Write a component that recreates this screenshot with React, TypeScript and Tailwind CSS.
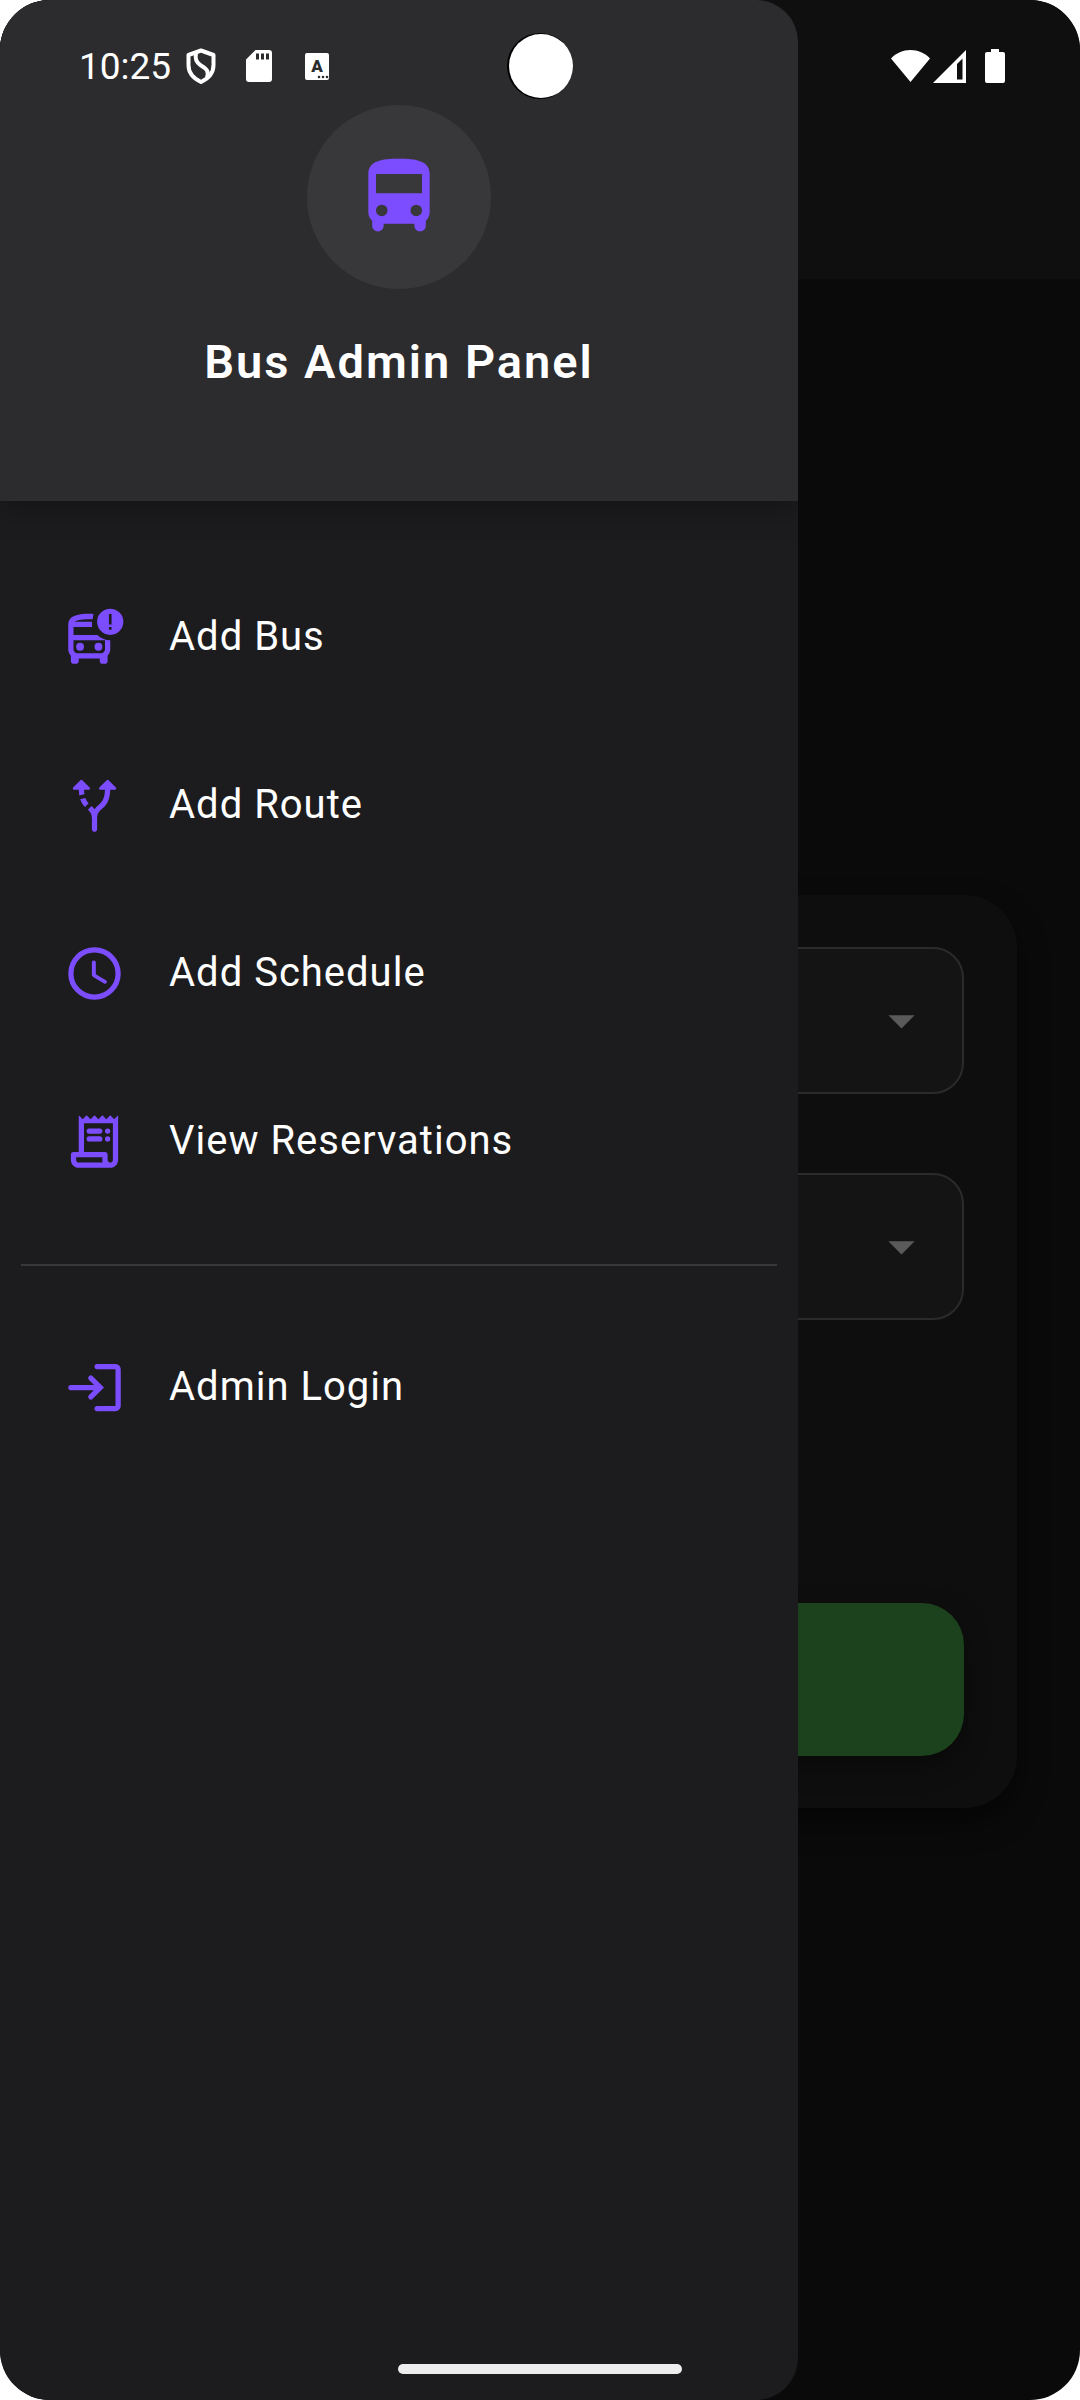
import React from "react";

type IconProps = { className?: string };

function BusIcon({ className }: IconProps) {
  return (
    <svg viewBox="0 0 24 24" fill="currentColor" className={className} aria-hidden="true">
      <path
        fillRule="evenodd"
        d="M4 16c0 .88.39 1.67 1 2.22V19.5a1.5 1.5 0 0 0 3 0V19h8v.5a1.5 1.5 0 0 0 3 0v-1.28c.61-.55 1-1.34 1-2.22V6c0-3.5-3.58-4-8-4s-8 .5-8 4v10zm3.5 1a1.5 1.5 0 1 1 0-3 1.5 1.5 0 0 1 0 3zm9 0a1.5 1.5 0 1 1 0-3 1.5 1.5 0 0 1 0 3zM18 11H6V6h12v5z"
      />
    </svg>
  );
}

function BusAlertIcon({ className }: IconProps) {
  return (
    <svg viewBox="0 0 24 24" fill="currentColor" className={className} aria-hidden="true">
      <path
        fillRule="evenodd"
        d="M11.6 3.02C6.4 2.8 2 3.4 2 7v9.5c0 .95.38 1.81 1 2.44V21c0 .55.45 1 1 1h1c.55 0 1-.45 1-1v-1h8v1c0 .55.45 1 1 1h1c.55 0 1-.45 1-1v-2.06c.62-.63 1-1.49 1-2.44V13c-1.91 0-3.63-.76-4.89-2H4V8h7.08A7 7 0 0 1 11.08 6H4.43c.6-.52 2.03-1 5.57-1h1.29c.07-.5.17-1.2.31-1.98zM4 13h12v3.5c0 .83-.67 1.5-1.5 1.5h-9c-.83 0-1.5-.67-1.5-1.5V13z"
      />
      <circle cx="6.5" cy="15.5" r="1.5" />
      <circle cx="13.5" cy="15.5" r="1.5" />
      <path
        fillRule="evenodd"
        d="M18 1a5 5 0 1 0 0 10 5 5 0 0 0 0-10zm.5 8h-1V8h1v1zm0-2h-1V3h1v4z"
      />
    </svg>
  );
}

function RouteIcon({ className }: IconProps) {
  return (
    <svg viewBox="0 0 24 24" fill="currentColor" className={className} aria-hidden="true">
      <path d="M9.78 11.16l-1.42 1.42c-.68-.69-1.34-1.58-1.79-2.94l1.94-.49c.32.89.77 1.5 1.27 2.01zM10.15 5.15L7.35 2.35a.5.5 0 0 0-.7 0L3.85 5.15a.5.5 0 0 0 .36.85h1.81c.02.81.08 1.54.19 2.17l1.94-.49C8.08 7.2 8.03 6.63 8.02 6h1.78c.44 0 .67-.54.35-.85zM20.15 5.15l-2.8-2.8a.5.5 0 0 0-.7 0l-2.8 2.8a.5.5 0 0 0 .36.85h1.78c-.1 3.68-1.28 4.75-2.54 5.88-.5.44-1.01.92-1.45 1.55-.34-.49-.73-.88-1.13-1.24L9.46 13.6c.93.85 1.54 1.54 1.54 3.4v4c0 .55.45 1 1 1s1-.45 1-1v-4c0-2.02.71-2.66 1.79-3.63 1.38-1.24 3.08-2.78 3.2-7.37h1.8c.45 0 .67-.54.36-.85z" />
    </svg>
  );
}

function ClockIcon({ className }: IconProps) {
  return (
    <svg viewBox="0 0 24 24" fill="currentColor" className={className} aria-hidden="true">
      <circle cx="12" cy="12" r="9" fill="none" stroke="currentColor" strokeWidth="2" />
      <path d="M11.78 7h-.06c-.4 0-.72.32-.72.72v4.72c0 .35.18.68.49.86l4.15 2.49c.34.2.78.1.98-.24.21-.34.1-.79-.25-.99l-3.87-2.3V7.72c0-.4-.32-.72-.72-.72z" />
    </svg>
  );
}

function ReceiptIcon({ className }: IconProps) {
  return (
    <svg viewBox="0 0 24 24" fill="currentColor" className={className} aria-hidden="true">
      <path
        fillRule="evenodd"
        d="M19.5 3.5L18 2l-1.5 1.5L15 2l-1.5 1.5L12 2l-1.5 1.5L9 2 7.5 3.5 6 2v14H4c-.55 0-1 .45-1 1v2c0 1.66 1.34 3 3 3h12c1.66 0 3-1.34 3-3V2l-1.5 1.5zM15 20H6c-.55 0-1-.45-1-1v-1h10v2zm4-1c0 .55-.45 1-1 1s-1-.45-1-1v-2c0-.55-.45-1-1-1H8V5h11v14z"
      />
      <rect x="9" y="7" width="6" height="2" rx="1" />
      <rect x="9" y="10" width="6" height="2" rx="1" />
      <circle cx="17" cy="8" r="1" />
      <circle cx="17" cy="11" r="1" />
    </svg>
  );
}

function LoginIcon({ className }: IconProps) {
  return (
    <svg
      viewBox="0 0 24 24"
      fill="none"
      stroke="currentColor"
      strokeWidth="2"
      strokeLinecap="round"
      className={className}
      aria-hidden="true"
    >
      <path d="M13 4h7a1 1 0 0 1 1 1v14a1 1 0 0 1-1 1h-7" />
      <path d="M3 12h11M10.6 8.4l3.6 3.6-3.6 3.6" />
    </svg>
  );
}

function StatusBar() {
  return (
    <div className="pointer-events-none absolute inset-x-0 top-0 z-20 flex h-[132px] items-center justify-between pr-[75px] pl-[79px] text-white">
      <div className="flex items-center">
        <span className="text-[37px] leading-none">10:25</span>
        <svg viewBox="0 0 30 36" fill="none" stroke="currentColor" strokeWidth="4" strokeLinejoin="round" className="ml-[15px] h-9 w-[30px]" aria-hidden="true">
          <path d="M15 2.5L27.500 7v10c0 8-5 13.500-12.500 17C7.500 30.500 2.500 25 2.500 17V7z" />
          <path d="M10 5c-1 6 0 9 5 12.500 6 3.500 8 6 6 12" />
        </svg>
        <svg viewBox="0 0 26 32" className="ml-[30px] h-8 w-[26px]" fill="currentColor" aria-hidden="true">
          <path
            fillRule="evenodd"
            d="M9.500 0H23a3 3 0 0 1 3 3v26a3 3 0 0 1-3 3H3a3 3 0 0 1-3-3V9.500zM10 3.500v6h3v-6zm5 0v6h3v-6zm5 0v6h3v-6z"
          />
        </svg>
        <svg viewBox="0 0 24 27" className="ml-[33px] h-[27px] w-6" aria-hidden="true">
          <rect width="24" height="27" rx="2" fill="currentColor" />
          <text x="12" y="19" textAnchor="middle" fontSize="17" fontWeight="900" fill="#2c2c2e">
            A
          </text>
          <circle cx="14" cy="24" r="1.300" fill="#2c2c2e" />
          <circle cx="18" cy="24" r="1.300" fill="#2c2c2e" />
          <circle cx="22" cy="24" r="1.300" fill="#2c2c2e" />
        </svg>
      </div>
      <div className="absolute top-[33px] left-1/2 size-[66px] -translate-x-1/2 rounded-full bg-black pt-px pl-0.5">
        <div className="size-16 rounded-full bg-white" />
      </div>
      <div className="flex items-center">
        <svg viewBox="0 0 39 32" className="h-8 w-[39px]" fill="currentColor" aria-hidden="true">
          <path d="M0 8.500C5 3 12 0 19.500 0S34 3 39 8.500L19.500 32z" />
        </svg>
        <svg viewBox="0 0 33 33" className="ml-[3px] size-[33px]" fill="currentColor" aria-hidden="true">
          <path fillRule="evenodd" d="M33 0v33H0zM29.500 8.500L24 14v15.500h5.500z" />
        </svg>
        <svg viewBox="0 0 20 34" className="ml-[19px] h-[34px] w-5" fill="currentColor" aria-hidden="true">
          <path d="M6 0h8v3h4a2 2 0 0 1 2 2v27a2 2 0 0 1-2 2H2a2 2 0 0 1-2-2V5a2 2 0 0 1 2-2h4z" />
        </svg>
      </div>
    </div>
  );
}

function NavItem({ icon: Icon, label }: { icon: (p: IconProps) => React.JSX.Element; label: string }) {
  return (
    <a href="#" className="flex h-[168px] items-center gap-[43px] px-[63px]">
      <Icon className="size-[63px] shrink-0 text-[#7c4dff]" />
      <span className="text-[40px] leading-[52px] tracking-[1px] text-white">{label}</span>
    </a>
  );
}

function Dropdown({ label }: { label: string }) {
  return (
    <div className="relative">
      <select
        aria-label={label}
        className="block h-[147px] w-full appearance-none rounded-[31px] border-2 border-[#2b2b2b] bg-[#141414]"
      />
      <svg
        viewBox="0 0 24 24"
        fill="#5a5a5a"
        className="pointer-events-none absolute inset-y-0 right-[31px] my-auto size-[63px]"
        aria-hidden="true"
      >
        <path d="M7 10l5 5 5-5z" />
      </svg>
    </div>
  );
}

export default function App() {
  return (
    <div className="bg-white font-[Roboto,sans-serif]">
      <div className="relative flex min-h-screen flex-col overflow-hidden rounded-[50px] bg-[#0a0a0a]">
        <StatusBar />

        <header className="h-[279px] bg-[#0f0f0f]" />
        <main className="flex flex-1 flex-col justify-center px-[63px] pt-6">
          <form className="flex flex-col rounded-[52px] bg-[#0e0e0e] px-[53px] py-[52px] shadow-[0_14px_28px_rgba(0,0,0,0.5)]">
            <div className="flex flex-col gap-[79px]">
              <Dropdown label="From" />
              <Dropdown label="To" />
            </div>
            <button
              type="button"
              aria-label="Search"
              className="mt-[283px] h-[153px] rounded-[42px] bg-[#1c411d] shadow-[0_10px_26px_rgba(0,0,0,0.4)]"
            />
          </form>
        </main>

        <aside className="absolute inset-y-0 left-0 z-10 flex w-[798px] max-w-[74%] flex-col overflow-hidden rounded-r-[42px] bg-[#1c1c1e]">
          <div className="flex h-[501px] shrink-0 flex-col items-center bg-[#2c2c2e] pt-[105px] shadow-[0_8px_28px_rgba(0,0,0,0.3)]">
            <div className="flex size-[184px] items-center justify-center rounded-full bg-[#38383a]">
              <BusIcon className="size-[92px] text-[#7c4dff]" />
            </div>
            <h1 className="mt-[43px] text-[47px] leading-[60px] font-semibold tracking-[2px] text-white">
              Bus Admin Panel
            </h1>
          </div>
          <nav className="flex flex-col pt-[52px]">
            <NavItem icon={BusAlertIcon} label="Add Bus" />
            <NavItem icon={RouteIcon} label="Add Route" />
            <NavItem icon={ClockIcon} label="Add Schedule" />
            <NavItem icon={ReceiptIcon} label="View Reservations" />
            <hr className="mt-[39px] mb-[37px] mx-[21px] h-0 border-0 border-t-2 border-[#38383a]" />
            <NavItem icon={LoginIcon} label="Admin Login" />
          </nav>
        </aside>

        <div className="absolute bottom-[26px] left-1/2 z-20 h-2.5 w-[284px] -translate-x-1/2 rounded-[5px] bg-[#ededee]" />
      </div>
    </div>
  );
}
